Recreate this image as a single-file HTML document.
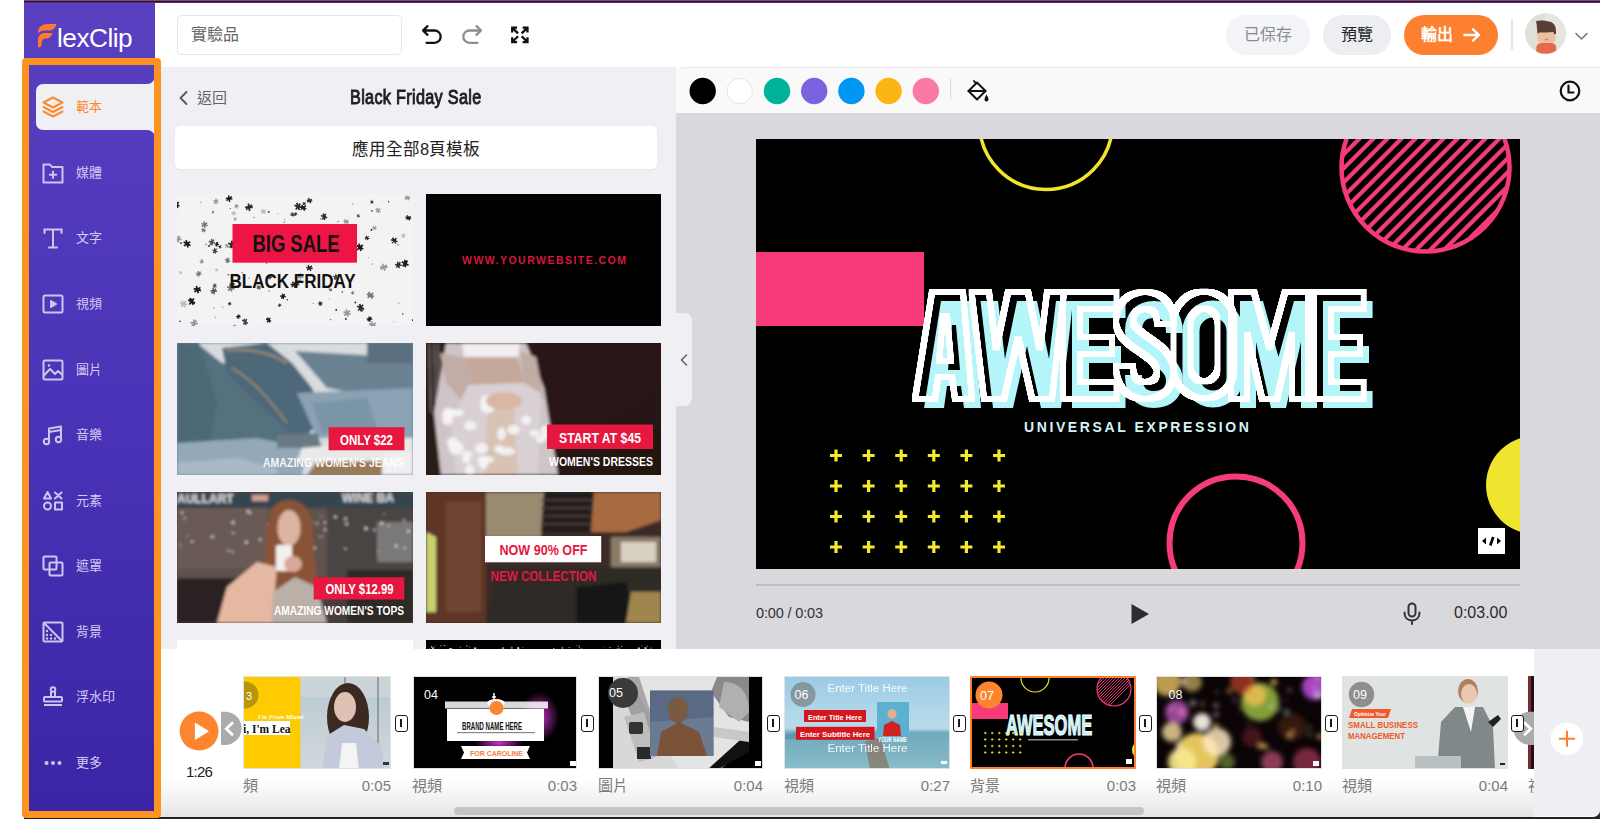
<!DOCTYPE html>
<html lang="zh-TW">
<head>
<meta charset="utf-8">
<style>
*{margin:0;padding:0;box-sizing:border-box}
html,body{width:1600px;height:819px;overflow:hidden;background:#fff;font-family:"Liberation Sans",sans-serif}
.a{position:absolute}
#topline{left:24px;top:0;width:1576px;height:3px;background:linear-gradient(#8d4a66 0,#8d4a66 1px,#2a1020 1px,#2a1020 2px,#4b2f9a 2px)}
#side{left:24px;top:3px;width:131px;height:816px;background:linear-gradient(#5a40c1,#4a33b6 50%,#3b25a6)}
#obox{left:22px;top:58px;width:139px;height:760px;border:7.5px solid #fd9320;border-radius:4px}
#topbar{left:155px;top:3px;width:1445px;height:64px;background:#fff}
#panel{left:155px;top:67px;width:521px;height:582px;background:#f0f0f4}
#tools{left:676px;top:67px;width:924px;height:46px;background:#f9f9fa;border-top-left-radius:8px;border-top:1px solid #e8e8ee}
#canvas{left:676px;top:113px;width:924px;height:536px;background:#d8d8dd}
#timeline{left:155px;top:649px;width:1445px;height:168px;background:linear-gradient(#fff 0,#fff 130px,#ececec 158px,#e4e4e6 168px)}
#botline{left:24px;top:817px;width:1576px;height:2px;background:#222}
.si{left:76px;font-size:13px;line-height:18px;color:#d3cbf2;white-space:nowrap}
.btn{top:15px;height:40px;border-radius:20px;font-size:16px;line-height:40px;text-align:center;white-space:nowrap}
.clip{top:676px;height:93px;overflow:hidden;border:1px solid #e2e2e2;background:#fff}
.clip>svg{display:block}
.dv{top:715px;width:13px;height:17px;border:1.6px solid #1a1a1a;border-radius:3px;background:#fff}
.dv::after{content:"";position:absolute;left:3.9px;top:3px;width:2px;height:8px;background:#1a1a1a}
.lb{top:777px;font-size:15px;line-height:18px;color:#7a7a7a;white-space:nowrap}
.lbr{top:777px;width:100px;text-align:right;font-size:15px;line-height:18px;color:#7a7a7a}
</style>
</head>
<body>
<svg width="0" height="0" style="position:absolute"><defs><filter id="pb" x="-5%" y="-5%" width="110%" height="110%"><feGaussianBlur stdDeviation="1.6"/></filter></defs></svg>
<div id="topline" class="a"></div>
<div id="side" class="a"></div>
<div id="topbar" class="a"></div>
<div id="panel" class="a"></div>
<div id="tools" class="a"></div>
<div id="canvas" class="a"></div>

<div class="a" style="left:177px;top:194px;width:236px;height:132px;overflow:hidden">
<svg width="236" height="132" viewBox="0 0 236 132"><rect width="236" height="132" fill="#f3f3f3"/><path d="M35.5 90.9L39.7 92.7M37.5 89.5L37.7 94.1M39.2 90.1L36.0 93.5" stroke="#555" stroke-width="1.03"/><circle cx="37.6" cy="91.8" r="1.03" fill="#555"/><path d="M227.4 23.0L231.0 23.0M228.6 21.3L229.8 24.7M230.5 21.7L227.9 24.2" stroke="#bbb" stroke-width="0.81"/><circle cx="229.2" cy="23.0" r="0.81" fill="#bbb"/><path d="M12.9 105.3L16.3 106.6M14.1 104.2L15.2 107.7M16.2 105.0L13.1 106.9" stroke="#2a2a2a" stroke-width="0.81"/><circle cx="14.6" cy="106.0" r="0.81" fill="#2a2a2a"/><path d="M179.6 51.6L186.3 55.1M182.0 49.6L183.9 57.0M185.9 50.9L180.1 55.8" stroke="#1a1a1a" stroke-width="1.71"/><circle cx="183.0" cy="53.3" r="1.71" fill="#1a1a1a"/><circle cx="153.7" cy="125.6" r="0.56" fill="#2a2a2a"/><circle cx="175.8" cy="10.0" r="0.56" fill="#555"/><path d="M33.4 96.8L40.0 97.3M36.0 93.8L37.3 100.3M38.9 94.7L34.4 99.5" stroke="#555" stroke-width="1.48"/><circle cx="36.7" cy="97.1" r="1.48" fill="#555"/><path d="M193.1 7.6L196.5 8.7M194.6 6.4L195.1 9.9M196.2 7.0L193.5 9.3" stroke="#2a2a2a" stroke-width="0.81"/><circle cx="194.8" cy="8.1" r="0.81" fill="#2a2a2a"/><circle cx="225.8" cy="120.0" r="0.70" fill="#1a1a1a"/><path d="M129.2 73.5L135.7 74.6M131.0 71.0L133.9 77.0M134.8 71.7L130.1 76.3" stroke="#2a2a2a" stroke-width="1.48"/><circle cx="132.4" cy="74.0" r="1.48" fill="#2a2a2a"/><path d="M65.2 126.2L71.0 129.4M67.0 124.7L69.1 130.9M69.8 125.0L66.4 130.6" stroke="#444" stroke-width="1.48"/><circle cx="68.1" cy="127.8" r="1.48" fill="#444"/><path d="M16.7 94.7L24.1 96.6M19.4 92.0L21.3 99.3M23.4 93.3L17.4 98.0" stroke="#1a1a1a" stroke-width="1.71"/><circle cx="20.4" cy="95.7" r="1.71" fill="#1a1a1a"/><circle cx="51.3" cy="80.8" r="0.70" fill="#2a2a2a"/><path d="M156.1 82.2L161.3 84.2M158.6 80.4L158.9 86.0M160.4 81.0L157.0 85.4" stroke="#444" stroke-width="1.26"/><circle cx="158.7" cy="83.2" r="1.26" fill="#444"/><circle cx="38.5" cy="123.5" r="0.91" fill="#bbb"/><circle cx="100.9" cy="19.7" r="0.56" fill="#999"/><path d="M121.1 86.7L124.3 88.3M121.9 85.9L123.5 89.1M124.1 86.4L121.3 88.6" stroke="#555" stroke-width="0.81"/><circle cx="122.7" cy="87.5" r="0.81" fill="#555"/><path d="M-1.9 44.7L4.7 45.5M1.1 41.9L1.7 48.4M3.3 42.4L-0.5 47.9" stroke="#999" stroke-width="1.48"/><circle cx="1.4" cy="45.1" r="1.48" fill="#999"/><path d="M11.2 106.0L18.1 109.1M12.8 104.2L16.5 110.9M16.9 104.5L12.3 110.5" stroke="#1a1a1a" stroke-width="1.71"/><circle cx="14.6" cy="107.5" r="1.71" fill="#1a1a1a"/><path d="M36.4 6.2L41.5 8.7M38.9 4.6L39.0 10.2M41.1 5.7L36.8 9.2" stroke="#999" stroke-width="1.26"/><circle cx="39.0" cy="7.4" r="1.26" fill="#999"/><path d="M224.8 67.7L231.5 71.2M227.9 65.7L228.4 73.3M230.6 66.6L225.7 72.4" stroke="#1a1a1a" stroke-width="1.71"/><circle cx="228.1" cy="69.5" r="1.71" fill="#1a1a1a"/><path d="M31.8 47.2L38.1 49.1M34.6 44.9L35.2 51.4M37.0 45.6L32.9 50.7" stroke="#555" stroke-width="1.48"/><circle cx="34.9" cy="48.2" r="1.48" fill="#555"/><circle cx="182.4" cy="-0.6" r="0.91" fill="#999"/><path d="M2.0 77.9L5.2 79.6M3.1 77.0L4.2 80.5M5.0 77.6L2.3 79.9" stroke="#bbb" stroke-width="0.81"/><circle cx="3.6" cy="78.7" r="0.81" fill="#bbb"/><circle cx="178.4" cy="108.5" r="0.91" fill="#2a2a2a"/><circle cx="32.1" cy="52.0" r="0.91" fill="#1a1a1a"/><circle cx="152.0" cy="104.9" r="0.70" fill="#bbb"/><path d="M24.5 35.2L28.6 37.3M25.8 34.1L27.3 38.4M28.5 35.0L24.7 37.6" stroke="#777" stroke-width="1.03"/><circle cx="26.6" cy="36.3" r="1.03" fill="#777"/><path d="M144.0 21.5L150.2 23.8M146.3 19.5L147.9 25.9M148.8 19.9L145.4 25.5" stroke="#2a2a2a" stroke-width="1.48"/><circle cx="147.1" cy="22.7" r="1.48" fill="#2a2a2a"/><circle cx="168.6" cy="116.8" r="0.56" fill="#bbb"/><circle cx="221.0" cy="50.7" r="0.70" fill="#555"/><path d="M179.7 21.0L182.9 22.7M180.9 20.1L181.7 23.6M182.7 20.7L179.9 23.0" stroke="#444" stroke-width="0.81"/><circle cx="181.3" cy="21.8" r="0.81" fill="#444"/><path d="M54.5 18.7L59.0 19.8M56.2 17.0L57.3 21.5M58.7 18.0L54.8 20.5" stroke="#bbb" stroke-width="1.03"/><circle cx="56.7" cy="19.2" r="1.03" fill="#bbb"/><path d="M18.9 79.3L24.4 80.2M21.2 77.0L22.1 82.5M23.6 77.8L19.7 81.7" stroke="#777" stroke-width="1.26"/><circle cx="21.7" cy="79.8" r="1.26" fill="#777"/><path d="M129.8 6.2L135.3 7.2M131.6 4.1L133.6 9.3M134.9 5.2L130.2 8.1" stroke="#2a2a2a" stroke-width="1.26"/><circle cx="132.6" cy="6.7" r="1.26" fill="#2a2a2a"/><circle cx="23.8" cy="8.4" r="0.70" fill="#999"/><path d="M189.8 100.2L197.1 102.5M191.6 98.0L195.3 104.7M196.3 98.8L190.6 103.9" stroke="#777" stroke-width="1.71"/><circle cx="193.4" cy="101.3" r="1.71" fill="#777"/><path d="M48.8 4.2L55.4 5.0M51.6 1.4L52.7 7.9M54.8 2.7L49.5 6.6" stroke="#1a1a1a" stroke-width="1.48"/><circle cx="52.1" cy="4.6" r="1.48" fill="#1a1a1a"/><path d="M51.1 49.2L58.4 51.6M54.6 46.6L54.9 54.2M56.8 47.2L52.7 53.6" stroke="#2a2a2a" stroke-width="1.71"/><circle cx="54.7" cy="50.4" r="1.71" fill="#2a2a2a"/><path d="M166.5 117.9L173.7 120.3M169.3 115.4L170.9 122.8M173.1 116.7L167.2 121.5" stroke="#999" stroke-width="1.71"/><circle cx="170.1" cy="119.1" r="1.71" fill="#999"/><path d="M141.1 109.0L145.6 110.1M142.7 107.3L144.0 111.8M144.8 107.8L141.9 111.3" stroke="#2a2a2a" stroke-width="1.03"/><circle cx="143.3" cy="109.6" r="1.03" fill="#2a2a2a"/><circle cx="89.6" cy="69.3" r="0.56" fill="#2a2a2a"/><circle cx="91.9" cy="17.8" r="0.91" fill="#1a1a1a"/><path d="M120.3 81.1L126.4 83.5M123.3 79.0L123.5 85.6M126.2 80.6L120.6 84.0" stroke="#999" stroke-width="1.48"/><circle cx="123.4" cy="82.3" r="1.48" fill="#999"/><path d="M35.3 56.0L40.6 57.8M37.4 54.2L38.5 59.7M39.6 54.7L36.2 59.1" stroke="#444" stroke-width="1.26"/><circle cx="37.9" cy="56.9" r="1.26" fill="#444"/><path d="M224.3 40.7L228.3 42.9M226.1 39.5L226.5 44.1M227.9 40.2L224.7 43.4" stroke="#bbb" stroke-width="1.03"/><circle cx="226.3" cy="41.8" r="1.03" fill="#bbb"/><path d="M52.3 90.1L58.2 93.1M54.3 88.4L56.2 94.8M57.4 89.2L53.0 94.0" stroke="#2a2a2a" stroke-width="1.48"/><circle cx="55.2" cy="91.6" r="1.48" fill="#2a2a2a"/><path d="M37.6 50.1L42.1 50.5M39.7 48.0L39.9 52.6M41.0 48.3L38.7 52.3" stroke="#1a1a1a" stroke-width="1.03"/><circle cx="39.8" cy="50.3" r="1.03" fill="#1a1a1a"/><path d="M189.7 125.0L195.3 125.2M191.9 122.4L193.2 127.8M194.4 123.0L190.7 127.2" stroke="#1a1a1a" stroke-width="1.26"/><circle cx="192.5" cy="125.1" r="1.26" fill="#1a1a1a"/><circle cx="235.8" cy="126.1" r="0.91" fill="#1a1a1a"/><path d="M228.7 23.4L234.2 24.4M230.2 21.4L232.7 26.4M233.7 22.2L229.3 25.6" stroke="#1a1a1a" stroke-width="1.26"/><circle cx="231.5" cy="23.9" r="1.26" fill="#1a1a1a"/><circle cx="195.4" cy="70.0" r="0.56" fill="#444"/><path d="M41.3 52.3L44.7 53.3M42.8 51.0L43.2 54.6M44.3 51.6L41.7 54.0" stroke="#2a2a2a" stroke-width="0.81"/><circle cx="43.0" cy="52.8" r="0.81" fill="#2a2a2a"/><circle cx="110.3" cy="105.7" r="0.70" fill="#1a1a1a"/><path d="M100.8 111.2L104.4 111.3M102.4 109.5L102.8 113.0M103.9 110.0L101.3 112.5" stroke="#2a2a2a" stroke-width="0.81"/><circle cx="102.6" cy="111.2" r="0.81" fill="#2a2a2a"/><path d="M187.8 43.6L192.3 44.4M189.2 41.8L190.9 46.1M191.7 42.4L188.3 45.5" stroke="#2a2a2a" stroke-width="1.03"/><circle cx="190.0" cy="44.0" r="1.03" fill="#2a2a2a"/><circle cx="211.6" cy="7.7" r="0.70" fill="#2a2a2a"/><path d="M119.0 90.0L122.6 90.5M120.0 88.6L121.7 91.8M121.8 88.7L119.9 91.8" stroke="#444" stroke-width="0.81"/><circle cx="120.8" cy="90.2" r="0.81" fill="#444"/><path d="M113.5 90.5L120.1 90.6M115.5 87.6L118.1 93.6M118.9 88.1L114.7 93.1" stroke="#2a2a2a" stroke-width="1.48"/><circle cx="116.8" cy="90.6" r="1.48" fill="#2a2a2a"/><path d="M56.5 24.2L59.7 25.9M57.6 23.3L58.7 26.8M59.2 23.7L57.0 26.5" stroke="#999" stroke-width="0.81"/><circle cx="58.1" cy="25.1" r="0.81" fill="#999"/><path d="M47.9 65.6L53.3 67.1M50.0 63.6L51.2 69.1M52.2 64.1L49.0 68.7" stroke="#777" stroke-width="1.26"/><circle cx="50.6" cy="66.4" r="1.26" fill="#777"/><circle cx="36.9" cy="113.7" r="0.56" fill="#444"/><circle cx="161.1" cy="27.6" r="0.70" fill="#444"/><path d="M89.1 124.9L94.1 127.3M90.5 123.6L92.8 128.6M93.3 123.9L89.9 128.3" stroke="#1a1a1a" stroke-width="1.26"/><circle cx="91.6" cy="126.1" r="1.26" fill="#1a1a1a"/><circle cx="4.0" cy="49.2" r="0.91" fill="#2a2a2a"/><path d="M218.1 70.6L224.7 71.3M220.5 67.7L222.3 74.1M223.4 68.3L219.4 73.5" stroke="#2a2a2a" stroke-width="1.48"/><circle cx="221.4" cy="70.9" r="1.48" fill="#2a2a2a"/><path d="M103.2 102.0L108.8 102.7M105.4 99.6L106.6 105.1M107.8 100.2L104.2 104.5" stroke="#1a1a1a" stroke-width="1.26"/><circle cx="106.0" cy="102.3" r="1.26" fill="#1a1a1a"/><circle cx="159.2" cy="115.9" r="0.91" fill="#1a1a1a"/><circle cx="216.8" cy="127.8" r="0.56" fill="#999"/><path d="M173.9 98.4L177.4 99.3M175.5 97.1L175.8 100.7M176.9 97.6L174.3 100.2" stroke="#777" stroke-width="0.81"/><circle cx="175.6" cy="98.9" r="0.81" fill="#777"/><path d="M24.4 29.6L30.6 31.7M27.0 27.4L27.9 33.9M30.1 28.6L24.9 32.7" stroke="#777" stroke-width="1.48"/><circle cx="27.5" cy="30.6" r="1.48" fill="#777"/><path d="M2.8 109.3L10.3 110.5M4.9 106.5L8.2 113.3M8.8 106.9L4.3 113.0" stroke="#bbb" stroke-width="1.71"/><circle cx="6.5" cy="109.9" r="1.71" fill="#bbb"/><circle cx="36.0" cy="17.4" r="0.56" fill="#1a1a1a"/><path d="M182.5 114.9L186.7 116.8M183.9 113.7L185.3 118.1M186.2 114.2L183.0 117.5" stroke="#777" stroke-width="1.03"/><circle cx="184.6" cy="115.9" r="1.03" fill="#777"/><path d="M203.0 73.1L210.6 73.4M205.5 69.7L208.0 76.8M209.8 71.0L203.7 75.5" stroke="#999" stroke-width="1.71"/><circle cx="206.8" cy="73.3" r="1.71" fill="#999"/><circle cx="91.5" cy="83.5" r="0.70" fill="#bbb"/><path d="M57.4 11.3L61.7 13.1M59.3 9.9L59.8 14.5M61.5 11.0L57.6 13.5" stroke="#999" stroke-width="1.03"/><circle cx="59.6" cy="12.2" r="1.03" fill="#999"/><circle cx="45.7" cy="113.3" r="0.70" fill="#999"/><circle cx="71.9" cy="84.2" r="0.91" fill="#bbb"/><path d="M195.2 33.8L199.8 34.3M196.5 31.9L198.4 36.1M199.1 32.4L195.9 35.7" stroke="#999" stroke-width="1.03"/><circle cx="197.5" cy="34.0" r="1.03" fill="#999"/><path d="M166.4 26.9L171.8 28.4M167.7 25.2L170.5 30.1M171.4 26.0L166.9 29.3" stroke="#999" stroke-width="1.26"/><circle cx="169.1" cy="27.6" r="1.26" fill="#999"/><circle cx="196.0" cy="6.2" r="0.56" fill="#999"/><path d="M50.1 92.8L57.5 94.8M52.9 90.1L54.7 97.5M56.4 91.0L51.2 96.6" stroke="#777" stroke-width="1.71"/><circle cx="53.8" cy="93.8" r="1.71" fill="#777"/><circle cx="3.1" cy="127.3" r="0.91" fill="#444"/><path d="M151.8 95.1L155.2 96.5M152.6 94.2L154.4 97.3M154.8 94.6L152.2 97.0" stroke="#555" stroke-width="0.81"/><circle cx="153.5" cy="95.8" r="0.81" fill="#555"/><circle cx="107.2" cy="28.1" r="0.70" fill="#444"/><path d="M113.5 19.7L117.8 21.2M114.8 18.3L116.5 22.6M117.6 19.2L113.7 21.7" stroke="#444" stroke-width="1.03"/><circle cx="115.6" cy="20.4" r="1.03" fill="#444"/><circle cx="107.6" cy="25.5" r="0.56" fill="#777"/><circle cx="35.9" cy="18.8" r="0.70" fill="#2a2a2a"/><path d="M123.2 12.5L129.3 14.9M124.9 10.7L127.6 16.7M128.8 11.6L123.7 15.8" stroke="#1a1a1a" stroke-width="1.48"/><circle cx="126.3" cy="13.7" r="1.48" fill="#1a1a1a"/><path d="M125.6 9.0L129.0 10.1M126.5 8.0L128.1 11.2M128.3 8.1L126.2 11.0" stroke="#2a2a2a" stroke-width="0.81"/><circle cx="127.3" cy="9.6" r="0.81" fill="#2a2a2a"/><circle cx="136.4" cy="109.3" r="0.56" fill="#555"/><path d="M214.1 45.7L220.4 47.6M215.6 43.7L218.8 49.5M219.4 44.2L215.0 49.1" stroke="#1a1a1a" stroke-width="1.48"/><circle cx="217.2" cy="46.6" r="1.48" fill="#1a1a1a"/><circle cx="191.6" cy="63.6" r="0.56" fill="#999"/><path d="M13.4 128.7L20.9 129.7M16.7 125.4L17.6 133.0M19.5 126.2L14.8 132.2" stroke="#999" stroke-width="1.71"/><circle cx="17.1" cy="129.2" r="1.71" fill="#999"/><path d="M59.1 122.5L63.7 122.8M60.9 120.4L61.9 124.9M63.0 121.0L59.8 124.3" stroke="#1a1a1a" stroke-width="1.03"/><circle cx="61.4" cy="122.6" r="1.03" fill="#1a1a1a"/><circle cx="194.9" cy="16.8" r="0.91" fill="#444"/><path d="M68.2 13.2L75.8 13.3M71.4 9.5L72.6 17.0M75.1 11.0L69.0 15.5" stroke="#2a2a2a" stroke-width="1.71"/><circle cx="72.0" cy="13.2" r="1.71" fill="#2a2a2a"/><path d="M117.4 11.4L124.7 13.5M119.8 8.9L122.3 16.0M123.3 9.4L118.8 15.5" stroke="#2a2a2a" stroke-width="1.71"/><circle cx="121.0" cy="12.5" r="1.71" fill="#2a2a2a"/><circle cx="77.2" cy="23.4" r="0.56" fill="#555"/><path d="M116.9 20.0L120.5 20.3M118.6 18.3L118.7 21.9M119.6 18.6L117.8 21.7" stroke="#2a2a2a" stroke-width="0.81"/><circle cx="118.7" cy="20.1" r="0.81" fill="#2a2a2a"/><path d="M180.1 112.3L187.2 115.0M182.7 110.0L184.6 117.3M186.1 110.8L181.2 116.5" stroke="#2a2a2a" stroke-width="1.71"/><circle cx="183.6" cy="113.6" r="1.71" fill="#2a2a2a"/><circle cx="65.2" cy="78.8" r="0.91" fill="#999"/><path d="M83.8 16.6L89.1 18.4M85.4 14.9L87.5 20.1M88.7 15.7L84.3 19.2" stroke="#bbb" stroke-width="1.26"/><circle cx="86.5" cy="17.5" r="1.26" fill="#bbb"/><circle cx="165.2" cy="98.0" r="0.70" fill="#1a1a1a"/><path d="M54.3 133.0L59.8 134.1M57.0 130.8L57.2 136.4M58.7 131.3L55.5 135.9" stroke="#777" stroke-width="1.26"/><circle cx="57.1" cy="133.6" r="1.26" fill="#777"/><path d="M90.6 82.9L95.2 83.4M92.8 80.8L93.0 85.4M94.7 81.7L91.1 84.5" stroke="#444" stroke-width="1.03"/><circle cx="92.9" cy="83.1" r="1.03" fill="#444"/><circle cx="53.3" cy="14.5" r="0.56" fill="#2a2a2a"/><path d="M192.0 129.8L199.2 132.4M194.6 127.4L196.6 134.7M198.8 129.0L192.4 133.1" stroke="#999" stroke-width="1.71"/><circle cx="195.6" cy="131.1" r="1.71" fill="#999"/><circle cx="29.1" cy="50.5" r="0.91" fill="#999"/><path d="M-4.6 9.2L2.5 12.0M-2.9 7.2L0.8 13.9M1.8 8.1L-3.9 13.1" stroke="#1a1a1a" stroke-width="1.71"/><circle cx="-1.0" cy="10.6" r="1.71" fill="#1a1a1a"/><path d="M22.5 66.9L27.0 67.9M24.3 65.1L25.1 69.7M26.3 65.7L23.2 69.1" stroke="#999" stroke-width="1.03"/><circle cx="24.7" cy="67.4" r="1.03" fill="#999"/><circle cx="92.0" cy="97.1" r="0.70" fill="#444"/><path d="M79.6 92.7L83.9 94.2M80.9 91.3L82.6 95.6M83.5 92.0L80.0 94.9" stroke="#555" stroke-width="1.03"/><circle cx="81.7" cy="93.4" r="1.03" fill="#555"/><path d="M198.6 15.1L203.6 17.6M200.1 13.7L202.0 19.0M203.2 14.5L199.0 18.2" stroke="#999" stroke-width="1.26"/><circle cx="201.1" cy="16.4" r="1.26" fill="#999"/><circle cx="194.4" cy="35.9" r="0.91" fill="#1a1a1a"/><path d="M227.6 3.6L233.2 4.2M229.0 1.4L231.8 6.3M232.6 2.2L228.2 5.6" stroke="#999" stroke-width="1.26"/><circle cx="230.4" cy="3.9" r="1.26" fill="#999"/><path d="M37.8 75.8L41.4 76.1M39.0 74.3L40.3 77.6M41.0 74.8L38.2 77.1" stroke="#bbb" stroke-width="0.81"/><circle cx="39.6" cy="76.0" r="0.81" fill="#bbb"/><circle cx="143.8" cy="25.0" r="0.91" fill="#999"/><path d="M47.9 50.8L52.0 52.9M48.9 49.9L51.1 53.9M51.4 50.1L48.6 53.7" stroke="#999" stroke-width="1.03"/><circle cx="50.0" cy="51.9" r="1.03" fill="#999"/><path d="M50.9 109.2L54.4 110.2M52.5 107.9L52.8 111.5M53.9 108.4L51.4 111.0" stroke="#1a1a1a" stroke-width="0.81"/><circle cx="52.6" cy="109.7" r="0.81" fill="#1a1a1a"/><circle cx="168.8" cy="125.0" r="0.91" fill="#2a2a2a"/><path d="M6.6 48.1L13.5 51.4M9.1 46.1L11.0 53.5M13.2 47.7L6.9 51.9" stroke="#1a1a1a" stroke-width="1.71"/><circle cx="10.0" cy="49.8" r="1.71" fill="#1a1a1a"/><circle cx="221.9" cy="109.1" r="0.70" fill="#777"/><rect x="55.5" y="30" width="124.5" height="38.7" fill="#ee1545"/>
<text x="75.5" y="58" font-family="Liberation Sans" font-weight="bold" font-size="24" textLength="87" lengthAdjust="spacingAndGlyphs" fill="#111">BIG SALE</text>
<text x="52.5" y="94" font-family="Liberation Sans" font-weight="bold" font-size="21" textLength="126" lengthAdjust="spacingAndGlyphs" fill="#111">BLACK FRIDAY</text>
</svg></div>
<div class="a" style="left:426px;top:194px;width:235px;height:132px;background:#000">
<svg width="235" height="132" viewBox="0 0 235 132"><text x="36" y="70" font-family="Liberation Sans" font-weight="bold" font-size="10.5" textLength="164" lengthAdjust="spacing" fill="#d8173e">WWW.YOURWEBSITE.COM</text></svg></div>

<div class="a" style="left:177px;top:343px;width:236px;height:132px;overflow:hidden;background:#6d8596">
<svg width="236" height="132" viewBox="0 0 236 132">
<defs><linearGradient id="jg1" x1="0" y1="0" x2="1" y2="1"><stop offset="0" stop-color="#5e7788"/><stop offset="0.6" stop-color="#7089a0"/><stop offset="1" stop-color="#a8b8c4"/></linearGradient></defs>
<g filter="url(#pb)"><rect width="236" height="132" fill="#d9dcdf"/>
<path d="M0 0H20L45 20L90 30L130 75L135 100L95 112L0 115Z" fill="#55707f"/>
<path d="M0 0H22L40 60L30 115H0Z" fill="#4d6777"/>
<path d="M45 5L90 0L115 20L135 45L150 80L120 95L80 60L50 30Z" fill="#4e6879"/>
<path d="M50 8C70 5 90 8 110 20" stroke="#b89a6a" stroke-width="1.5" fill="none"/>
<path d="M55 25C80 40 95 60 110 80" stroke="#b89a6a" stroke-width="1.2" fill="none"/>
<path d="M118 8L236 15V60L150 45Z" fill="#6b8192"/>
<path d="M190 0H236V20H190Z" fill="#5a7080"/>
<path d="M120 50L236 45V95L140 95Z" fill="#8aa2b4"/>
<path d="M135 60L190 55L200 85L145 90Z" fill="#7a94a8"/>
<path d="M0 100L80 95L130 105L125 132H0Z" fill="#93a9b8"/>
<path d="M0 120L60 115L100 125L100 132H0Z" fill="#a9bac6"/>
<path d="M100 92L140 90L145 105L100 105Z" fill="#6a7a84"/>
<path d="M125 105L236 95V118H120Z" fill="#e9e9e8"/>
<path d="M140 118H210V132H130Z" fill="#9a7a55"/>
<path d="M205 112L236 110V132H205Z" fill="#f0f0f0"/>
</g><rect x="151.6" y="84.2" width="75.8" height="23.1" fill="#e8173f"/>
<text x="163" y="101.5" font-family="Liberation Sans" font-weight="bold" font-size="14" textLength="53" lengthAdjust="spacingAndGlyphs" fill="#fff">ONLY $22</text>
<text x="86" y="123.5" font-family="Liberation Sans" font-weight="bold" font-size="12.5" textLength="141" lengthAdjust="spacingAndGlyphs" fill="#fff" fill-opacity="0.92">AMAZING WOMEN'S JEANS</text>
</svg></div>

<div class="a" style="left:426px;top:343px;width:235px;height:132px;overflow:hidden;background:#1f1512">
<svg width="235" height="132" viewBox="0 0 235 132">
<defs><linearGradient id="dg1" x1="0" y1="0" x2="1" y2="1"><stop offset="0" stop-color="#2a1a15"/><stop offset="0.6" stop-color="#2a1813"/><stop offset="1" stop-color="#1a0e0c"/></linearGradient></defs>
<g filter="url(#pb)"><rect width="235" height="132" fill="url(#dg1)"/>
<rect x="0" y="0" width="14" height="132" fill="#2a1c18"/>
<path d="M3 0L5 70M8 0L10 60M12 0L13 50" stroke="#8a8080" stroke-width="1.2"/>
<path d="M20 0H100L118 45L132 132H15L8 70L14 35Z" fill="#cfc5c8"/>
<path d="M36 0H94L92 14L38 14Z" fill="#f2eef0"/>
<path d="M38 14H92L98 40L42 42Z" fill="#c4a89c"/>
<path d="M14 10L36 14L60 55L45 68L20 40Z" fill="#c2aca6"/>
<path d="M94 8L110 14L118 55L100 62Z" fill="#c2aca6"/>
<path d="M42 42L98 40L115 50L112 132H30L25 80Z" fill="#d8d0d4"/>
<path d="M62 65L88 65L92 132H58Z" fill="#d8c2b4"/>
<ellipse cx="43.8" cy="127.0" rx="4.6" ry="5.8" fill="#f6f4f6" opacity="0.9"/><ellipse cx="28.9" cy="69.8" rx="9.0" ry="3.8" fill="#f6f4f6" opacity="0.9"/><ellipse cx="87.4" cy="86.7" rx="6.3" ry="5.0" fill="#f6f4f6" opacity="0.9"/><ellipse cx="40.2" cy="116.4" rx="4.4" ry="3.9" fill="#f6f4f6" opacity="0.9"/><ellipse cx="22.1" cy="71.3" rx="6.0" ry="6.6" fill="#f6f4f6" opacity="0.9"/><ellipse cx="59.8" cy="59.1" rx="5.3" ry="7.0" fill="#f6f4f6" opacity="0.9"/><ellipse cx="26.6" cy="99.6" rx="5.9" ry="5.6" fill="#f6f4f6" opacity="0.9"/><ellipse cx="55.5" cy="105.3" rx="6.5" ry="5.6" fill="#f6f4f6" opacity="0.9"/><ellipse cx="114.6" cy="96.5" rx="4.7" ry="3.3" fill="#f6f4f6" opacity="0.9"/><ellipse cx="119.3" cy="89.1" rx="5.0" ry="6.8" fill="#f6f4f6" opacity="0.9"/><ellipse cx="80.8" cy="108.3" rx="8.4" ry="4.1" fill="#f6f4f6" opacity="0.9"/><ellipse cx="57.5" cy="120.2" rx="4.7" ry="6.1" fill="#f6f4f6" opacity="0.9"/><ellipse cx="30.2" cy="105.2" rx="7.5" ry="6.8" fill="#f6f4f6" opacity="0.9"/><ellipse cx="108.6" cy="90.3" rx="5.0" ry="3.6" fill="#f6f4f6" opacity="0.9"/><ellipse cx="75.5" cy="90.8" rx="4.4" ry="6.6" fill="#f6f4f6" opacity="0.9"/><ellipse cx="73.3" cy="106.1" rx="5.1" ry="4.0" fill="#f6f4f6" opacity="0.9"/><ellipse cx="21.3" cy="77.5" rx="5.3" ry="4.7" fill="#f6f4f6" opacity="0.9"/><ellipse cx="59.6" cy="116.7" rx="8.5" ry="3.7" fill="#f6f4f6" opacity="0.9"/><ellipse cx="61.6" cy="63.3" rx="7.3" ry="6.9" fill="#f6f4f6" opacity="0.9"/><ellipse cx="41.2" cy="111.3" rx="5.5" ry="3.1" fill="#f6f4f6" opacity="0.9"/><ellipse cx="100.3" cy="77.3" rx="4.9" ry="4.7" fill="#f6f4f6" opacity="0.9"/><ellipse cx="44.3" cy="82.8" rx="6.2" ry="4.7" fill="#f6f4f6" opacity="0.9"/>
<ellipse cx="78" cy="58" rx="18" ry="9" fill="#d9b6a6"/>
<path d="M130 0H235V132H135Z" fill="#2a1a16" opacity="0.35"/>
</g><rect x="121" y="81.5" width="106" height="24.5" fill="#e8173f"/>
<text x="133" y="100" font-family="Liberation Sans" font-weight="bold" font-size="14" textLength="82" lengthAdjust="spacingAndGlyphs" fill="#fff">START AT $45</text>
<text x="123" y="122.5" font-family="Liberation Sans" font-weight="bold" font-size="12.5" textLength="104" lengthAdjust="spacingAndGlyphs" fill="#fff">WOMEN'S DRESSES</text>
</svg></div>

<div class="a" style="left:177px;top:492px;width:236px;height:131px;overflow:hidden;background:#4c403c">
<svg width="236" height="131" viewBox="0 0 236 131">
<defs><linearGradient id="cg1" x1="0" y1="0" x2="1" y2="0"><stop offset="0" stop-color="#5a4c48"/><stop offset="0.5" stop-color="#4c403c"/><stop offset="1" stop-color="#3e3a3a"/></linearGradient></defs>
<g filter="url(#pb)"><rect width="236" height="131" fill="url(#cg1)"/>
<rect x="0" y="16" width="236" height="70" fill="#5e524e"/>
<rect x="0" y="16" width="90" height="60" fill="#6a5a55"/>
<rect x="150" y="16" width="86" height="70" fill="#4a4442"/>
<rect x="200" y="30" width="36" height="40" fill="#7a7878"/>
<rect width="236" height="16" fill="#34444f"/>
<text x="0" y="11" font-family="Liberation Sans" font-weight="bold" font-size="12" fill="#e8e8e8">AULLART</text><rect x="75" y="3" width="16" height="6" fill="#d0a090"/><text x="165" y="10" font-family="Liberation Sans" font-weight="bold" font-size="12" fill="#e8e8e8">WINE BA</text>
<circle cx="56.2" cy="40.9" r="0.9" fill="#e8f0f0"/><circle cx="142.5" cy="44.3" r="0.6" fill="#e8f0f0"/><circle cx="3.1" cy="53.2" r="0.8" fill="#e8f0f0"/><circle cx="55.3" cy="59.8" r="0.9" fill="#e8f0f0"/><circle cx="197.4" cy="38.0" r="1.0" fill="#e8f0f0"/><circle cx="35.5" cy="44.7" r="1.2" fill="#e8f0f0"/><circle cx="123.5" cy="49.1" r="1.1" fill="#e8f0f0"/><circle cx="15.1" cy="49.8" r="1.0" fill="#e8f0f0"/><circle cx="71.1" cy="19.3" r="1.2" fill="#e8f0f0"/><circle cx="111.6" cy="48.2" r="1.2" fill="#e8f0f0"/><circle cx="168.5" cy="56.7" r="0.9" fill="#e8f0f0"/><circle cx="189.0" cy="36.7" r="1.3" fill="#e8f0f0"/><circle cx="207.4" cy="22.1" r="0.7" fill="#e8f0f0"/><circle cx="51.2" cy="58.6" r="0.9" fill="#e8f0f0"/><circle cx="147.9" cy="30.6" r="1.0" fill="#e8f0f0"/><circle cx="91.1" cy="32.7" r="1.0" fill="#e8f0f0"/><circle cx="137.9" cy="56.0" r="1.1" fill="#e8f0f0"/><circle cx="219.2" cy="54.0" r="1.3" fill="#e8f0f0"/><circle cx="158.4" cy="24.9" r="1.2" fill="#e8f0f0"/><circle cx="227.7" cy="56.0" r="1.0" fill="#e8f0f0"/><circle cx="168.5" cy="26.9" r="1.2" fill="#e8f0f0"/><circle cx="135.4" cy="30.0" r="0.6" fill="#e8f0f0"/><circle cx="201.5" cy="59.6" r="0.7" fill="#e8f0f0"/><circle cx="188.9" cy="35.2" r="0.7" fill="#e8f0f0"/><circle cx="69.4" cy="50.3" r="1.2" fill="#e8f0f0"/><circle cx="10.4" cy="43.8" r="0.6" fill="#e8f0f0"/><circle cx="169.6" cy="31.9" r="1.2" fill="#e8f0f0"/><circle cx="231.4" cy="39.2" r="1.3" fill="#e8f0f0"/><circle cx="73.1" cy="21.2" r="1.0" fill="#e8f0f0"/><circle cx="7.4" cy="26.3" r="0.9" fill="#e8f0f0"/><circle cx="144.1" cy="24.6" r="0.6" fill="#e8f0f0"/><circle cx="204.8" cy="31.2" r="1.3" fill="#e8f0f0"/><circle cx="211.6" cy="33.9" r="0.9" fill="#e8f0f0"/><circle cx="122.7" cy="45.0" r="1.0" fill="#e8f0f0"/><circle cx="132.0" cy="44.0" r="1.3" fill="#e8f0f0"/><circle cx="119.7" cy="36.1" r="1.1" fill="#e8f0f0"/><circle cx="56.1" cy="30.6" r="1.3" fill="#e8f0f0"/><circle cx="123.0" cy="41.0" r="0.6" fill="#e8f0f0"/><circle cx="98.0" cy="42.4" r="0.6" fill="#e8f0f0"/><circle cx="145.3" cy="44.6" r="0.6" fill="#e8f0f0"/><circle cx="148.1" cy="37.6" r="1.1" fill="#e8f0f0"/><circle cx="83.2" cy="47.7" r="1.1" fill="#e8f0f0"/><circle cx="5.2" cy="20.5" r="1.1" fill="#e8f0f0"/><circle cx="227.3" cy="28.5" r="0.9" fill="#e8f0f0"/><circle cx="139.9" cy="31.4" r="0.9" fill="#e8f0f0"/>
<rect x="0" y="86" width="60" height="45" fill="#2a2220"/>
<rect x="170" y="78" width="66" height="53" fill="#2e2a28"/>
<path d="M90 45C90 15 100 8 112 8C126 8 136 18 136 45L142 110L84 110Z" fill="#8a5236"/>
<ellipse cx="112" cy="36" rx="11.5" ry="18" fill="#dcb4a4"/>
<path d="M40 131L50 95L80 70L100 75L95 131Z" fill="#e5b8a2"/>
<path d="M95 131L96 100L118 85L140 95L150 131Z" fill="#bab0a8"/>
<rect x="99" y="53" width="16" height="26" rx="2" fill="#f4f0ec"/>
<ellipse cx="116" cy="72" rx="9" ry="8" fill="#d8a898"/>
</g><rect x="136.7" y="85.3" width="90.6" height="22.2" fill="#e8173f"/>
<text x="148.5" y="102" font-family="Liberation Sans" font-weight="bold" font-size="14" textLength="68" lengthAdjust="spacingAndGlyphs" fill="#fff">ONLY $12.99</text>
<text x="97" y="122.5" font-family="Liberation Sans" font-weight="bold" font-size="12.5" textLength="130" lengthAdjust="spacingAndGlyphs" fill="#fff">AMAZING WOMEN'S TOPS</text>
</svg></div>

<div class="a" style="left:426px;top:492px;width:235px;height:131px;overflow:hidden;background:#3a2c25">
<svg width="235" height="131" viewBox="0 0 235 131">
<g filter="url(#pb)"><rect width="235" height="131" fill="#3a2c25"/>
<path d="M0 0H60V131H0Z" fill="#5e3626"/>
<path d="M20 10H55V120H20Z" fill="#6e4430"/>
<path d="M0 40L10 45V120H0Z" fill="#c8d070"/>
<path d="M60 0H120L115 45H60Z" fill="#9a8a70"/>
<path d="M118 0H175L170 40H115Z" fill="#221c1a"/>
<path d="M115 8H170M115 16H170M115 24H170M115 32H170" stroke="#4a3e38" stroke-width="2"/>
<path d="M168 0H235V28L200 40L165 40Z" fill="#a86a40"/>
<path d="M185 45H235V90H185Z" fill="#8a7a68"/><path d="M195 50H230V70H195Z" fill="#d8d2c4"/>
<path d="M70 75H235V131H60Z" fill="#2e2a28"/>
<path d="M150 95L200 90L210 131H150Z" fill="#141212"/>
<path d="M205 100H235V131H200Z" fill="#a0864e"/>
</g><rect x="59" y="44" width="116.2" height="26.3" fill="#fff"/>
<text x="73.5" y="63" font-family="Liberation Sans" font-weight="bold" font-size="15" textLength="88" lengthAdjust="spacingAndGlyphs" fill="#e5173f">NOW 90% OFF</text>
<text x="64.5" y="88.5" font-family="Liberation Sans" font-weight="bold" font-size="14" textLength="106" lengthAdjust="spacingAndGlyphs" fill="#e5173f">NEW COLLECTION</text>
</svg></div>
<div class="a" style="left:177px;top:640px;width:236px;height:9px;background:#fff"></div>
<div class="a" style="left:426px;top:640px;width:235px;height:9px;overflow:hidden;background:#000"><svg width="235" height="9"><circle cx="127.8" cy="3.6" r="0.7" fill="#ccc"/><circle cx="7.1" cy="3.3" r="1.0" fill="#ccc"/><circle cx="9.6" cy="0.3" r="0.5" fill="#666"/><circle cx="60.7" cy="6.0" r="1.1" fill="#aaa"/><circle cx="85.7" cy="2.7" r="1.2" fill="#666"/><circle cx="61.9" cy="5.7" r="0.7" fill="#aaa"/><circle cx="70.2" cy="5.8" r="0.9" fill="#666"/><circle cx="5.7" cy="1.9" r="0.8" fill="#ccc"/><circle cx="225.1" cy="3.1" r="0.6" fill="#ccc"/><circle cx="192.3" cy="1.1" r="0.8" fill="#666"/><circle cx="189.4" cy="5.9" r="1.1" fill="#888"/><circle cx="143.3" cy="2.6" r="0.7" fill="#aaa"/><circle cx="185.0" cy="4.8" r="0.8" fill="#ccc"/><circle cx="177.7" cy="2.0" r="0.5" fill="#666"/><circle cx="113.7" cy="4.4" r="0.5" fill="#ccc"/><circle cx="208.5" cy="7.9" r="0.6" fill="#666"/><circle cx="49.2" cy="3.4" r="1.2" fill="#ccc"/><circle cx="40.9" cy="1.1" r="0.8" fill="#888"/><circle cx="176.5" cy="6.8" r="0.9" fill="#666"/><circle cx="184.0" cy="2.4" r="0.6" fill="#aaa"/><circle cx="88.0" cy="5.9" r="0.6" fill="#888"/><circle cx="43.8" cy="1.9" r="0.6" fill="#888"/><circle cx="77.0" cy="3.2" r="1.2" fill="#888"/><circle cx="153.3" cy="0.8" r="0.8" fill="#666"/><circle cx="24.2" cy="3.8" r="1.1" fill="#ccc"/><circle cx="215.8" cy="0.3" r="0.6" fill="#666"/><circle cx="11.9" cy="4.8" r="1.1" fill="#888"/><circle cx="219.5" cy="3.0" r="1.1" fill="#ccc"/><circle cx="142.3" cy="6.2" r="0.9" fill="#666"/><circle cx="25.0" cy="4.8" r="0.9" fill="#888"/><circle cx="8.8" cy="2.7" r="0.4" fill="#aaa"/><circle cx="9.0" cy="5.9" r="1.1" fill="#666"/><circle cx="193.2" cy="3.3" r="0.7" fill="#aaa"/><circle cx="18.4" cy="0.3" r="0.8" fill="#ccc"/><circle cx="14.9" cy="0.8" r="0.7" fill="#888"/><circle cx="150.8" cy="0.7" r="0.5" fill="#aaa"/><circle cx="96.7" cy="2.3" r="0.6" fill="#666"/><circle cx="73.7" cy="4.5" r="0.7" fill="#ccc"/><circle cx="4.3" cy="6.1" r="1.0" fill="#888"/><circle cx="92.2" cy="3.2" r="1.2" fill="#ccc"/><circle cx="212.8" cy="3.4" r="1.1" fill="#ccc"/><circle cx="136.4" cy="2.9" r="1.0" fill="#888"/><circle cx="3.5" cy="4.4" r="0.9" fill="#ccc"/><circle cx="21.0" cy="5.0" r="0.7" fill="#888"/><circle cx="34.4" cy="2.3" r="0.8" fill="#666"/><circle cx="25.7" cy="3.9" r="1.0" fill="#888"/><circle cx="71.2" cy="6.7" r="0.4" fill="#ccc"/><circle cx="74.2" cy="4.9" r="0.9" fill="#666"/><circle cx="213.4" cy="5.0" r="1.1" fill="#888"/><circle cx="151.1" cy="6.9" r="0.9" fill="#888"/><circle cx="195.7" cy="1.5" r="0.6" fill="#ccc"/><circle cx="221.5" cy="1.3" r="0.7" fill="#888"/><circle cx="58.3" cy="5.8" r="1.1" fill="#666"/><circle cx="208.6" cy="6.7" r="0.9" fill="#aaa"/><circle cx="27.8" cy="4.8" r="0.8" fill="#aaa"/><circle cx="153.2" cy="2.5" r="0.6" fill="#ccc"/><circle cx="155.5" cy="3.6" r="0.8" fill="#666"/><circle cx="0.8" cy="7.9" r="0.8" fill="#ccc"/><circle cx="180.2" cy="6.2" r="0.8" fill="#888"/><circle cx="191.3" cy="3.2" r="0.5" fill="#aaa"/></svg></div>
<div id="timeline" class="a"></div>

<svg class="a" style="left:179px;top:711px" width="65" height="41" viewBox="179 711 65 41">
<path d="M221 711.7H225A16.6 16.6 0 0 1 225 744.9H221Z" fill="#ababab"/>
<path d="M233 722.3L226.3 728.8L233 735.3" stroke="#fff" stroke-width="2.8" fill="none" stroke-linejoin="miter"/>
<circle cx="199.1" cy="731.1" r="19.5" fill="#fd8530"/>
<path d="M195.5 723.5L208 731.2L195.5 739Z" fill="#fff" stroke="#fff" stroke-width="1.2" stroke-linejoin="round"/>
</svg>
<div class="a" style="left:186px;top:763px;font-size:15px;line-height:18px;color:#222;letter-spacing:-0.8px">1:26</div>

<div class="a clip" style="left:243px;width:148px">
<svg width="148" height="93" viewBox="0 0 148 93">
<defs><linearGradient id="wg" x1="0" y1="0" x2="0" y2="1"><stop offset="0" stop-color="#b8c8d0"/><stop offset="1" stop-color="#d0d8dc"/></linearGradient></defs>
<rect width="148" height="93" fill="url(#wg)"/>
<rect x="56" y="0" width="92" height="20" fill="#c9d3d8"/>
<rect x="100" y="0" width="2" height="60" fill="#6a6a6a" opacity="0.5"/><rect x="133" y="0" width="2" height="70" fill="#6a6a6a" opacity="0.5"/>
<ellipse cx="104" cy="40" rx="21" ry="34" fill="#3b2a22"/>
<ellipse cx="101" cy="30" rx="11" ry="15" fill="#e0c2b4"/>
<path d="M78 93L84 58L100 48L120 52L138 70L140 93Z" fill="#c2cadb"/>
<path d="M95 93L98 66L112 66L115 93Z" fill="#f4f4f4"/>
<rect width="56.3" height="93" fill="#fecb00"/>
<circle cx="1" cy="18" r="13.5" fill="#b8940a"/>
<text x="2" y="22.5" font-family="Liberation Sans" font-size="11" fill="#fff">3</text>
<text x="14" y="42" font-family="Liberation Serif" font-style="italic" font-weight="bold" font-size="6.5" fill="#fff">I'm From Miami</text>
<rect x="0" y="44" width="46" height="14" fill="#fff"/>
<text x="-1" y="55.5" font-family="Liberation Serif" font-weight="bold" font-size="11.5" fill="#111">i, I'm Lea</text>
<rect x="139" y="85" width="6" height="3" fill="#333"/>
</svg></div>
<div class="a dv" style="left:395px"></div>
<div class="a clip" style="left:412.5px;width:164.5px">
<svg width="165" height="93" viewBox="0 0 165 93">
<defs><radialGradient id="pg" cx="0.5" cy="0.5" r="0.5"><stop offset="0" stop-color="#ff40ff" stop-opacity="0.8"/><stop offset="1" stop-color="#ff40ff" stop-opacity="0"/></radialGradient></defs>
<rect width="165" height="93" fill="#000"/>
<ellipse cx="125" cy="40" rx="20" ry="25" fill="url(#pg)"/>
<ellipse cx="85" cy="66" rx="25" ry="8" fill="url(#pg)"/>
<text x="10" y="22" font-family="Liberation Sans" font-size="12.5" fill="#fff">04</text>
<rect x="31" y="24.5" width="103" height="7" fill="#fff" opacity="0.85"/>
<rect x="33" y="32" width="97" height="32" fill="#fff"/>
<path d="M80 24L80 16M78 20h4" stroke="#fff" stroke-width="1.5"/>
<ellipse cx="82" cy="26" rx="9" ry="4" fill="#fff"/>
<circle cx="82.5" cy="31" r="7" fill="#fd8530"/>
<text x="48" y="52.5" font-family="Liberation Sans" font-weight="bold" font-size="10" textLength="60" lengthAdjust="spacingAndGlyphs" fill="#111">BRAND NAME HERE</text>
<rect x="43" y="55" width="78" height="1.2" fill="#888"/>
<path d="M47 69H116L113 75.5L116 82H47L50 75.5Z" fill="#fff"/>
<text x="56" y="79" font-family="Liberation Sans" font-weight="bold" font-size="8" textLength="53" lengthAdjust="spacingAndGlyphs" fill="#f08040">FOR CAROLINE</text>
<rect x="156" y="84" width="6" height="5" fill="#fff"/>
</svg></div>
<div class="a dv" style="left:581px"></div>
<div class="a clip" style="left:598.4px;width:164.6px">
<svg width="165" height="93" viewBox="0 0 165 93">
<rect width="165" height="93" fill="#000"/>
<path d="M14 0H118L150 20L150 70L120 93H14Z" fill="#e4e4e4"/>
<path d="M14 0H30L80 93H14Z" fill="#d8d8d8"/>
<path d="M118 0H150V45L130 40L112 15Z" fill="#8a8a8a"/>
<path d="M125 5C140 5 150 15 150 35L140 45L120 30Z" fill="#b0b0b0"/>
<path d="M150 55V75L118 93H108Z" fill="#111"/>
<path d="M20 8L30 0H40L60 60L45 70Z" fill="#3a3a3a" opacity="0.35"/><circle cx="24" cy="16" r="15" fill="#3a3a3a"/>
<path d="M25 40L45 35L58 80L40 85Z" fill="#bdbdbd"/>
<rect x="30" y="45" width="14" height="12" rx="2" fill="#333"/>
<rect x="38" y="70" width="14" height="12" fill="#2a2a2a"/>
<path d="M115 50L150 55V65L115 60Z" fill="#c8c8c8"/>
<rect x="51" y="13.4" width="63.6" height="65.6" fill="#5a6a84"/>
<path d="M51 45L114 40V79H51Z" fill="#6a7a90"/>
<ellipse cx="79" cy="33" rx="10" ry="13" fill="#7a5a42"/>
<path d="M58 79L62 55L80 45L100 55L108 79Z" fill="#7a5238"/>
<text x="10" y="20" font-family="Liberation Sans" font-size="12.5" fill="#fff">05</text>
<rect x="156" y="84" width="6" height="5" fill="#fff"/>
</svg></div>
<div class="a dv" style="left:767px"></div>
<div class="a clip" style="left:784px;width:165.5px">
<svg width="166" height="93" viewBox="0 0 166 93">
<defs><linearGradient id="sg" x1="0" y1="0" x2="0" y2="1"><stop offset="0" stop-color="#9ccbe6"/><stop offset="0.55" stop-color="#b9dcea"/><stop offset="0.6" stop-color="#6fa9bf"/><stop offset="1" stop-color="#8abdc8"/></linearGradient></defs>
<rect width="166" height="93" fill="url(#sg)"/>
<path d="M0 58C20 52 40 50 70 56L70 62H0Z" fill="#5a8a9a" opacity="0.6"/>
<path d="M80 65L95 60L105 93H85Z" fill="#8a7060" opacity="0.7"/>
<circle cx="18" cy="17.5" r="12.5" fill="#7a8585" opacity="0.75"/>
<text x="9.5" y="22" font-family="Liberation Sans" font-size="12.5" fill="#fff">06</text>
<text x="42.5" y="15" font-family="Liberation Sans" font-size="10" textLength="80" lengthAdjust="spacingAndGlyphs" fill="#fff" opacity="0.9">Enter Title Here</text>
<rect x="19" y="33" width="62" height="12" fill="#d4171f"/>
<text x="23" y="42.5" font-family="Liberation Sans" font-weight="bold" font-size="7.5" textLength="54" lengthAdjust="spacingAndGlyphs" fill="#fff">Enter Title Here</text>
<rect x="11" y="49.8" width="78.5" height="13" fill="#d4171f"/>
<text x="15" y="59.5" font-family="Liberation Sans" font-weight="bold" font-size="7.5" textLength="70" lengthAdjust="spacingAndGlyphs" fill="#fff">Enter Subtitle Here</text>
<rect x="92" y="25" width="32" height="34" fill="#5eb0d0"/>
<ellipse cx="107" cy="37" rx="4.5" ry="5" fill="#e0b090"/>
<path d="M98 59L99 48L107 44L115 48L116 59Z" fill="#d02020"/>
<text x="93" y="65" font-family="Liberation Sans" font-weight="bold" font-size="7" textLength="29" lengthAdjust="spacingAndGlyphs" fill="#fff">YOUR NAME</text>
<text x="42.5" y="75" font-family="Liberation Sans" font-size="10" textLength="80" lengthAdjust="spacingAndGlyphs" fill="#fff" opacity="0.9">Enter Title Here</text>
<rect x="156" y="84" width="6" height="3" fill="#fff"/>
</svg></div>
<div class="a dv" style="left:953px"></div>
<div class="a clip" style="left:969.5px;width:166.3px;border:2px solid #fd8030;border-radius:1px">
<svg width="163" height="90" viewBox="0 0 163 90">
<rect width="163" height="90" fill="#000"/>
<circle cx="63" cy="0" r="14" fill="none" stroke="#e8dc2a" stroke-width="1.2"/>
<circle cx="142" cy="11" r="17" fill="none" stroke="#f43a7a" stroke-width="1.2"/>
<defs><clipPath id="mhc"><circle cx="142" cy="11" r="17"/></clipPath></defs><g clip-path="url(#mhc)"><path d="M84.0 30L124.0 -10" stroke="#f43a7a" stroke-width="0.9"/><path d="M87.0 30L127.0 -10" stroke="#f43a7a" stroke-width="0.9"/><path d="M90.0 30L130.0 -10" stroke="#f43a7a" stroke-width="0.9"/><path d="M93.0 30L133.0 -10" stroke="#f43a7a" stroke-width="0.9"/><path d="M96.0 30L136.0 -10" stroke="#f43a7a" stroke-width="0.9"/><path d="M99.0 30L139.0 -10" stroke="#f43a7a" stroke-width="0.9"/><path d="M102.0 30L142.0 -10" stroke="#f43a7a" stroke-width="0.9"/><path d="M105.0 30L145.0 -10" stroke="#f43a7a" stroke-width="0.9"/><path d="M108.0 30L148.0 -10" stroke="#f43a7a" stroke-width="0.9"/><path d="M111.0 30L151.0 -10" stroke="#f43a7a" stroke-width="0.9"/><path d="M114.0 30L154.0 -10" stroke="#f43a7a" stroke-width="0.9"/><path d="M117.0 30L157.0 -10" stroke="#f43a7a" stroke-width="0.9"/><path d="M120.0 30L160.0 -10" stroke="#f43a7a" stroke-width="0.9"/><path d="M123.0 30L163.0 -10" stroke="#f43a7a" stroke-width="0.9"/><path d="M126.0 30L166.0 -10" stroke="#f43a7a" stroke-width="0.9"/><path d="M129.0 30L169.0 -10" stroke="#f43a7a" stroke-width="0.9"/><path d="M132.0 30L172.0 -10" stroke="#f43a7a" stroke-width="0.9"/><path d="M135.0 30L175.0 -10" stroke="#f43a7a" stroke-width="0.9"/></g>
<rect x="0" y="25" width="36" height="16" fill="#f8397a"/>
<circle cx="17" cy="17" r="13.5" fill="#fd8530"/>
<text x="8" y="22" font-family="Liberation Sans" font-size="12.5" fill="#fff">07</text>
<g transform="translate(34,57) scale(0.55,1)"><text x="0" y="0" font-family="Liberation Sans" font-weight="bold" font-size="30" fill="#b3f5f9" stroke="#fff" stroke-width="1.2">AWESOME</text></g>
<rect x="56" y="61" width="50" height="1.5" fill="#cfeff2" opacity="0.6"/>
<path d="M12.0 55.0h2.5M13.2 53.8v2.5" stroke="#f2e42b" stroke-width="0.9"/><path d="M12.0 61.5h2.5M13.2 60.2v2.5" stroke="#f2e42b" stroke-width="0.9"/><path d="M12.0 68.0h2.5M13.2 66.8v2.5" stroke="#f2e42b" stroke-width="0.9"/><path d="M12.0 74.5h2.5M13.2 73.2v2.5" stroke="#f2e42b" stroke-width="0.9"/><path d="M19.0 55.0h2.5M20.2 53.8v2.5" stroke="#f2e42b" stroke-width="0.9"/><path d="M19.0 61.5h2.5M20.2 60.2v2.5" stroke="#f2e42b" stroke-width="0.9"/><path d="M19.0 68.0h2.5M20.2 66.8v2.5" stroke="#f2e42b" stroke-width="0.9"/><path d="M19.0 74.5h2.5M20.2 73.2v2.5" stroke="#f2e42b" stroke-width="0.9"/><path d="M26.0 55.0h2.5M27.2 53.8v2.5" stroke="#f2e42b" stroke-width="0.9"/><path d="M26.0 61.5h2.5M27.2 60.2v2.5" stroke="#f2e42b" stroke-width="0.9"/><path d="M26.0 68.0h2.5M27.2 66.8v2.5" stroke="#f2e42b" stroke-width="0.9"/><path d="M26.0 74.5h2.5M27.2 73.2v2.5" stroke="#f2e42b" stroke-width="0.9"/><path d="M33.0 55.0h2.5M34.2 53.8v2.5" stroke="#f2e42b" stroke-width="0.9"/><path d="M33.0 61.5h2.5M34.2 60.2v2.5" stroke="#f2e42b" stroke-width="0.9"/><path d="M33.0 68.0h2.5M34.2 66.8v2.5" stroke="#f2e42b" stroke-width="0.9"/><path d="M33.0 74.5h2.5M34.2 73.2v2.5" stroke="#f2e42b" stroke-width="0.9"/><path d="M40.0 55.0h2.5M41.2 53.8v2.5" stroke="#f2e42b" stroke-width="0.9"/><path d="M40.0 61.5h2.5M41.2 60.2v2.5" stroke="#f2e42b" stroke-width="0.9"/><path d="M40.0 68.0h2.5M41.2 66.8v2.5" stroke="#f2e42b" stroke-width="0.9"/><path d="M40.0 74.5h2.5M41.2 73.2v2.5" stroke="#f2e42b" stroke-width="0.9"/><path d="M47.0 55.0h2.5M48.2 53.8v2.5" stroke="#f2e42b" stroke-width="0.9"/><path d="M47.0 61.5h2.5M48.2 60.2v2.5" stroke="#f2e42b" stroke-width="0.9"/><path d="M47.0 68.0h2.5M48.2 66.8v2.5" stroke="#f2e42b" stroke-width="0.9"/><path d="M47.0 74.5h2.5M48.2 73.2v2.5" stroke="#f2e42b" stroke-width="0.9"/>
<circle cx="107" cy="90" r="14" fill="none" stroke="#f43a7a" stroke-width="1.5"/>
<circle cx="170" cy="72" r="10" fill="#efe52e"/>
<rect x="154" y="81" width="6" height="5" fill="#fff"/>
</svg></div>
<div class="a dv" style="left:1139px"></div>
<div class="a clip" style="left:1156px;width:165.5px">
<svg width="166" height="93" viewBox="0 0 166 93">
<defs><filter id="bb" x="-20%" y="-20%" width="140%" height="140%"><feGaussianBlur stdDeviation="2.5"/></filter></defs>
<rect width="166" height="93" fill="#0a0406"/>
<g filter="url(#bb)">
<circle cx="40" cy="78" r="22" fill="#f0d060" opacity="0.95"/>
<circle cx="25" cy="85" r="14" fill="#f8e890" opacity="0.9"/>
<circle cx="60" cy="65" r="14" fill="#ffe8c0" opacity="0.85"/>
<circle cx="45" cy="45" r="9" fill="#fff8f0" opacity="0.9"/>
<circle cx="15" cy="55" r="10" fill="#f8e0a0" opacity="0.8"/>
<circle cx="20" cy="35" r="12" fill="#d060d0" opacity="0.7"/>
<circle cx="10" cy="5" r="14" fill="#e8c060" opacity="0.8"/>
<circle cx="35" cy="5" r="10" fill="#f0d070" opacity="0.6"/>
<circle cx="103" cy="25" r="19" fill="#90b040" opacity="0.9"/>
<circle cx="98" cy="18" r="11" fill="#f0c050" opacity="0.8"/>
<circle cx="85" cy="5" r="12" fill="#e05030" opacity="0.6"/>
<circle cx="158" cy="10" r="13" fill="#c050e0" opacity="0.85"/>
<circle cx="135" cy="50" r="14" fill="#502818" opacity="0.6"/>
<circle cx="150" cy="85" r="14" fill="#c04060" opacity="0.6"/>
<circle cx="115" cy="85" r="11" fill="#e06090" opacity="0.6"/>
<circle cx="70" cy="85" r="8" fill="#80a040" opacity="0.6"/>
<circle cx="95" cy="60" r="10" fill="#802030" opacity="0.5"/>
<circle cx="103.4" cy="69.0" r="2.6" fill="#ffd070" opacity="0.84"/><circle cx="128.8" cy="23.2" r="1.1" fill="#ff90d0" opacity="0.55"/><circle cx="77.9" cy="22.9" r="2.1" fill="#ff90d0" opacity="0.51"/><circle cx="36.0" cy="26.0" r="2.8" fill="#ffffff" opacity="0.56"/><circle cx="132.3" cy="12.9" r="2.2" fill="#ff90d0" opacity="0.55"/><circle cx="161.4" cy="0.5" r="2.5" fill="#ff90d0" opacity="0.85"/><circle cx="48.0" cy="89.4" r="2.1" fill="#ff90d0" opacity="0.57"/><circle cx="160.8" cy="18.3" r="2.9" fill="#ffffff" opacity="0.62"/><circle cx="60.0" cy="15.4" r="1.3" fill="#ffd070" opacity="0.63"/><circle cx="135.7" cy="54.5" r="2.2" fill="#f0b060" opacity="0.53"/><circle cx="59.0" cy="28.5" r="2.4" fill="#ff90d0" opacity="0.69"/><circle cx="117.0" cy="5.3" r="3.0" fill="#ffd070" opacity="0.88"/><circle cx="59.4" cy="37.6" r="2.1" fill="#ffffff" opacity="0.65"/><circle cx="96.0" cy="0.8" r="1.1" fill="#ff90d0" opacity="0.75"/><circle cx="158.4" cy="11.1" r="1.5" fill="#ffffff" opacity="0.64"/><circle cx="58.9" cy="48.8" r="2.6" fill="#ffd070" opacity="0.74"/><circle cx="129.6" cy="34.2" r="1.6" fill="#ffffff" opacity="0.88"/><circle cx="15.1" cy="31.7" r="2.2" fill="#ff90d0" opacity="0.64"/><circle cx="153.4" cy="50.7" r="1.6" fill="#f0b060" opacity="0.62"/><circle cx="132.6" cy="58.3" r="2.4" fill="#f0b060" opacity="0.90"/><circle cx="26.8" cy="4.5" r="3.0" fill="#ffffff" opacity="0.51"/><circle cx="122.9" cy="32.0" r="1.5" fill="#ffffff" opacity="0.56"/><circle cx="162.5" cy="59.4" r="2.6" fill="#f0b060" opacity="0.84"/><circle cx="21.7" cy="68.0" r="2.9" fill="#ffffff" opacity="0.54"/><circle cx="72.1" cy="13.9" r="2.7" fill="#f0b060" opacity="0.56"/><circle cx="153.1" cy="57.7" r="1.3" fill="#ffffff" opacity="0.88"/><circle cx="114.3" cy="29.5" r="1.5" fill="#ffffff" opacity="0.66"/><circle cx="24.3" cy="35.1" r="3.0" fill="#ff90d0" opacity="0.75"/><circle cx="82.9" cy="31.5" r="1.2" fill="#f0b060" opacity="0.71"/><circle cx="91.0" cy="46.8" r="1.1" fill="#f0b060" opacity="0.78"/><circle cx="110.2" cy="70.6" r="1.7" fill="#f0b060" opacity="0.83"/><circle cx="44.0" cy="91.2" r="2.4" fill="#f0b060" opacity="0.76"/><circle cx="96.4" cy="1.1" r="2.1" fill="#f0b060" opacity="0.63"/><circle cx="45.4" cy="26.9" r="2.0" fill="#f0b060" opacity="0.64"/><circle cx="106.9" cy="68.6" r="2.7" fill="#f0b060" opacity="0.87"/>
</g>
<text x="11.5" y="22" font-family="Liberation Sans" font-size="12.5" fill="#fff">08</text>
<rect x="156" y="84" width="6" height="5" fill="#fff"/>
</svg></div>
<div class="a dv" style="left:1325px"></div>
<div class="a clip" style="left:1342px;width:165.6px">
<svg width="166" height="93" viewBox="0 0 166 93">
<rect width="166" height="93" fill="#dfe4e3"/>
<ellipse cx="125" cy="14" rx="10" ry="12" fill="#b08060"/>
<ellipse cx="126" cy="17" rx="8" ry="10" fill="#e8c8b0"/>
<path d="M94 93L98 45L112 30L140 30L150 50L152 93Z" fill="#80888a"/>
<path d="M120 30L132 30L128 55Z" fill="#f4f4f4"/>
<rect x="72" y="79" width="46" height="14" fill="#b8c0c2"/>
<path d="M145 45L155 38L158 42L150 50Z" fill="#222"/>
<circle cx="18.5" cy="17.5" r="12.7" fill="#8e8e8e"/>
<text x="10" y="22" font-family="Liberation Sans" font-size="12.5" fill="#fff">09</text>
<path d="M9 32H48L45 41H6Z" fill="#f05a28"/>
<text x="11" y="39" font-family="Liberation Sans" font-weight="bold" font-size="5.5" textLength="32" lengthAdjust="spacingAndGlyphs" fill="#fff">Optimize Your</text>
<text x="5" y="51" font-family="Liberation Sans" font-weight="bold" font-size="8.5" textLength="70" lengthAdjust="spacingAndGlyphs" fill="#f05a28">SMALL BUSINESS</text>
<text x="5" y="61.5" font-family="Liberation Sans" font-weight="bold" font-size="8.5" textLength="57" lengthAdjust="spacingAndGlyphs" fill="#f05a28">MANAGEMENT</text>
<rect x="157" y="86" width="5" height="2" fill="#222"/>
</svg></div>
<div class="a clip" style="left:1528px;width:10px;background:#201015;border:none"><div style="width:3px;height:93px;background:#7a2a2a"></div></div>
<svg class="a" style="left:1512px;top:711px" width="22" height="35" viewBox="1512 711 22 35">
<path d="M1534 711.7H1530A16.6 16.6 0 0 0 1530 744.9H1534Z" fill="#ababab"/>
<path d="M1524 722.3L1530.7 728.8L1524 735.3" stroke="#fff" stroke-width="2.8" fill="none" stroke-linejoin="miter"/></svg>
<div class="a dv" style="left:1511px"></div>
<div class="a lb" style="left:243px">頻</div><div class="a lbr" style="left:291px">0:05</div>
<div class="a lb" style="left:412px">視頻</div><div class="a lbr" style="left:477px">0:03</div>
<div class="a lb" style="left:598px">圖片</div><div class="a lbr" style="left:663px">0:04</div>
<div class="a lb" style="left:784px">視頻</div><div class="a lbr" style="left:850px">0:27</div>
<div class="a lb" style="left:969.5px">背景</div><div class="a lbr" style="left:1036px">0:03</div>
<div class="a lb" style="left:1156px">視頻</div><div class="a lbr" style="left:1222px">0:10</div>
<div class="a lb" style="left:1342px">視頻</div><div class="a lbr" style="left:1408px">0:04</div>
<div class="a lb" style="left:1528px">視</div>
<div class="a" style="left:1590px;top:806px;width:10px;height:13px;background:#2a2624"></div><div class="a" style="left:1534px;top:649px;width:66px;height:167px;background:#eeeff3;border-bottom-right-radius:7px;box-shadow:0 1px 0 #fafafa"></div>

<svg class="a" style="left:1550px;top:722px" width="34" height="34" viewBox="0 0 34 34">
<circle cx="17" cy="16.8" r="16.3" fill="#fff"/>
<path d="M17 9.5V24M9.8 16.8H24.2" stroke="#fd8030" stroke-width="2" stroke-linecap="round"/></svg>
<div class="a" style="left:454px;top:807px;width:690px;height:8px;border-radius:4px;background:#c5c5c8"></div>
<div id="botline" class="a"></div>

<svg class="a" style="left:30px;top:15px" width="110" height="45" viewBox="30 15 110 45">
<path fill="#fb7a2c" d="M38 33.5C38 27.5 41.5 24 47.5 24L56.5 24C55.5 28 53 30.5 48.5 30.5L45 30.5C41 30.5 38.5 32 38 33.5Z"/>
<path fill="#fb7a2c" d="M38 47.5L38 40C38 35.5 41 33 45 33L52.5 33C51.5 36.5 49.5 38.5 46 38.5C43 38.5 41.5 40.5 41.5 43L41.5 45C41.5 46.5 40 47.5 38 47.5Z"/>
</svg>
<div class="a" style="left:57px;top:21.5px;font-size:26.2px;color:#fff;letter-spacing:-0.5px;line-height:32px;font-weight:normal">lexClip</div>
<div class="a" style="left:140px;top:74px;width:15px;height:66px;background:#efeff4"></div>
<div class="a" style="left:135px;top:70px;width:20px;height:14px;background:#573ebf;border-bottom-right-radius:8px"></div>
<div class="a" style="left:135px;top:130px;width:20px;height:14px;background:#553cbe;border-top-right-radius:8px"></div>
<div class="a" style="left:36px;top:84px;width:119px;height:46px;background:#efeff4;border-radius:7px 0 0 7px"></div>
<div class="a si" style="top:98px;color:#fb8a30">範本</div>
<div class="a si" style="top:164px">媒體</div>
<div class="a si" style="top:229px">文字</div>
<div class="a si" style="top:295px">視頻</div>
<div class="a si" style="top:361px">圖片</div>
<div class="a si" style="top:426px">音樂</div>
<div class="a si" style="top:492px">元素</div>
<div class="a si" style="top:557px">遮罩</div>
<div class="a si" style="top:623px">背景</div>
<div class="a si" style="top:688px">浮水印</div>
<div class="a si" style="top:754px">更多</div>
<svg class="a" style="left:40px;top:94px" width="26" height="26" viewBox="0 0 26 26" fill="none" stroke="#fb8a30" stroke-width="2" stroke-linejoin="round" stroke-linecap="round">
<path d="M13 3.5L22.5 8.5L13 13.5L3.5 8.5Z"/><path d="M3.5 13L13 18L22.5 13"/><path d="M3.5 17.5L13 22.5L22.5 17.5"/></svg>
<svg class="a" style="left:40px;top:160px" width="26" height="26" viewBox="0 0 26 26" fill="none" stroke="#cdc4ef" stroke-width="2" stroke-linejoin="round" stroke-linecap="round">
<path d="M3.5 4.5L10 4.5L12 7L22.5 7L22.5 22.5L3.5 22.5Z"/><path d="M13 11.5L13 18M9.8 14.8L16.2 14.8"/></svg>
<svg class="a" style="left:40px;top:225px" width="26" height="26" viewBox="0 0 26 26" fill="none" stroke="#cdc4ef" stroke-width="2" stroke-linecap="round">
<path d="M4.5 8L4.5 4.5L21.5 4.5L21.5 8M13 4.5L13 22.5M9 22.5L17 22.5"/></svg>
<svg class="a" style="left:40px;top:291px" width="26" height="26" viewBox="0 0 26 26" fill="none" stroke="#cdc4ef" stroke-width="2" stroke-linejoin="round">
<rect x="3.5" y="4.5" width="19" height="17" rx="1.5"/><path d="M11 10L16 13L11 16Z" fill="#cdc4ef"/></svg>
<svg class="a" style="left:40px;top:357px" width="26" height="26" viewBox="0 0 26 26" fill="none" stroke="#cdc4ef" stroke-width="2" stroke-linejoin="round">
<rect x="3.5" y="3.5" width="19" height="19" rx="1.5"/><path d="M3.5 19L10 12L15 17L18 14L22.5 18"/><circle cx="9" cy="8.5" r="1.2" fill="#cdc4ef" stroke="none"/></svg>
<svg class="a" style="left:40px;top:422px" width="26" height="26" viewBox="0 0 26 26" fill="none" stroke="#cdc4ef" stroke-width="2" stroke-linejoin="round">
<path d="M9 19.5L9 6.5L21 4.5L21 17.5M9 10L21 8"/><circle cx="6.5" cy="19.5" r="2.7"/><circle cx="18.5" cy="17.5" r="2.7"/></svg>
<svg class="a" style="left:40px;top:488px" width="26" height="26" viewBox="0 0 26 26" fill="none" stroke="#cdc4ef" stroke-width="2" stroke-linejoin="round" stroke-linecap="round">
<path d="M7.5 4L11 10.5L4 10.5Z"/><path d="M15 4.5L21.5 10.5M21.5 4.5L15 10.5"/><circle cx="7.5" cy="18" r="3.5"/><rect x="15" y="14.5" width="7" height="7"/></svg>
<svg class="a" style="left:40px;top:553px" width="26" height="26" viewBox="0 0 26 26" fill="none" stroke="#cdc4ef" stroke-width="2" stroke-linejoin="round">
<rect x="3.5" y="3.5" width="13" height="13" rx="1"/><rect x="9.5" y="9.5" width="13" height="13" rx="1"/></svg>
<svg class="a" style="left:40px;top:619px" width="26" height="26" viewBox="0 0 26 26" fill="none" stroke="#cdc4ef" stroke-width="2" stroke-linejoin="round">
<rect x="3.5" y="3.5" width="19" height="19" rx="1"/><path d="M3.5 3.5L22.5 22.5"/><g fill="#cdc4ef" stroke="none"><circle cx="7" cy="12" r="1.2"/><circle cx="7" cy="16" r="1.2"/><circle cx="7" cy="19.5" r="1.2"/><circle cx="11" cy="16" r="1.2"/><circle cx="11" cy="19.5" r="1.2"/><circle cx="15" cy="19.5" r="1.2"/></g></svg>
<svg class="a" style="left:40px;top:684px" width="26" height="26" viewBox="0 0 26 26" fill="none" stroke="#cdc4ef" stroke-width="2" stroke-linejoin="round">
<circle cx="13" cy="5.5" r="2.3"/><path d="M11 8L11 13M15 8L15 13"/><rect x="4" y="13" width="18" height="4.5" rx="1"/><path d="M4 21L22 21"/></svg>
<svg class="a" style="left:40px;top:750px" width="26" height="26" viewBox="0 0 26 26" fill="#cdc4ef">
<circle cx="6.5" cy="13" r="2"/><circle cx="13" cy="13" r="2"/><circle cx="19.5" cy="13" r="2"/></svg>

<div class="a" style="left:177px;top:15px;width:225px;height:40px;border:1px solid #e6e6ea;border-radius:5px;background:#fff"></div>
<div class="a" style="left:191px;top:25px;font-size:16px;line-height:20px;color:#666">實驗品</div>
<svg class="a" style="left:410px;top:15px" width="130" height="40" viewBox="410 15 130 40" fill="none" stroke-width="2.3" stroke-linecap="round" stroke-linejoin="round">
<path stroke="#111" d="M427.5 26.2L423 30.5L427.5 34.8M423 30.5L434.5 30.5A6.15 6.15 0 0 1 434.5 42.8L426.5 42.8"/>
<path stroke="#8d8d8d" d="M476.5 26.2L481 30.5L476.5 34.8M481 30.5L469.5 30.5A6.15 6.15 0 0 0 469.5 42.8L477.5 42.8"/>
<g stroke="#111" stroke-width="2.3" stroke-linecap="butt" stroke-linejoin="miter" fill="none">
<path d="M512.2 32.5V27.6H517.1M512.2 27.6L518 33.4"/>
<path d="M522.6 27.6H527.5V32.5M527.5 27.6L521.7 33.4"/>
<path d="M512.2 37.2V42.1H517.1M512.2 42.1L518 36.3"/>
<path d="M527.5 37.2V42.1H522.6M527.5 42.1L521.7 36.3"/>
</g></svg>
<div class="a btn" style="left:1226px;width:84px;background:#f3f4f7;color:#8a8a8e">已保存</div>
<div class="a btn" style="left:1323px;width:68px;background:#eceef2;color:#222">預覽</div>
<div class="a btn" style="left:1404px;width:94px;background:#fd8030;color:#fff;font-weight:bold;padding-right:28px;text-indent:0">輸出</div>
<svg class="a" style="left:1462px;top:27px" width="20" height="16" viewBox="0 0 20 16" fill="none" stroke="#fff" stroke-width="2.4" stroke-linecap="round" stroke-linejoin="round"><path d="M2.5 8L17 8M11 2.3L17 8L11 13.7"/></svg>
<div class="a" style="left:1511px;top:20px;width:1.5px;height:30px;background:#e3e5ea"></div>
<svg class="a" style="left:1525px;top:13px" width="41" height="41" viewBox="0 0 41 41">
<defs><clipPath id="avc"><circle cx="20.5" cy="20.5" r="20.3"/></clipPath><filter id="awr" filterUnits="userSpaceOnUse" x="880" y="260" width="520" height="170" color-interpolation-filters="sRGB">
<feComponentTransfer in="SourceAlpha" result="bin"><feFuncA type="linear" slope="2.5" intercept="-0.75"/></feComponentTransfer>
<feMorphology in="bin" operator="dilate" radius="3" result="o1"/>
<feMorphology in="bin" operator="erode" radius="3" result="i1"/>
<feComposite in="o1" in2="i1" operator="out" result="ring"/>
<feFlood flood-color="#fff"/><feComposite in2="ring" operator="in"/>
</filter>
</defs>
<g clip-path="url(#avc)">
<rect width="41" height="41" fill="#e0e0db"/><rect x="20" width="21" height="41" fill="#e6e6e1"/>
<path d="M12.5 18H30.5V26C30.5 28.5 28 30.5 25 30.5H18C15 30.5 12.5 28.5 12.5 26Z" fill="#e9c19f"/>
<path d="M11 8C15 7 22 7.5 26 9C29.5 10.5 31 14 31 18L31 21L29 21L28.5 19C24 19.5 18 19.5 14 19.5L12.5 21L12 16C12 13 11.5 10.5 11 8Z" fill="#573f33"/>
<ellipse cx="21.5" cy="26.5" rx="1.8" ry="0.9" fill="#e07a6a"/>
<path d="M11 41L11.5 33.5C12 31.5 14 30 16.5 30H26.5C29 30 30.5 31.5 31 33.5L31.5 41Z" fill="#e8694a"/>
</g></svg>
<svg class="a" style="left:1574px;top:31px" width="15" height="10" viewBox="0 0 15 10" fill="none" stroke="#777" stroke-width="1.6" stroke-linecap="round" stroke-linejoin="round"><path d="M2 2.5L7.5 8L13 2.5"/></svg>

<svg class="a" style="left:176px;top:89px" width="14" height="18" viewBox="0 0 14 18" fill="none" stroke="#555" stroke-width="1.8" stroke-linecap="round" stroke-linejoin="round"><path d="M10.5 3L4.5 9L10.5 15"/></svg>
<div class="a" style="left:197px;top:88px;font-size:15px;line-height:20px;color:#666">返回</div>
<div class="a" style="left:350px;top:84.5px;font-size:19.5px;line-height:24px;color:#1e1e1e;font-weight:normal;-webkit-text-stroke:0.95px #1e1e1e;letter-spacing:0.4px;transform:scaleX(0.83);transform-origin:0 0;white-space:nowrap">Black Friday Sale</div>
<div class="a" style="left:175px;top:126px;width:482px;height:43px;background:#fff;border-radius:5px;box-shadow:0 1px 2px rgba(0,0,0,0.04)"></div>
<div class="a" style="left:175px;top:138px;width:482px;text-align:center;font-size:16.5px;line-height:22px;color:#222">應用全部8頁模板</div>
<div class="a" style="left:676px;top:313px;width:16px;height:93px;background:#f0f0f4;border-radius:0 8px 8px 0"></div>
<svg class="a" style="left:677px;top:352px" width="14" height="16" viewBox="0 0 14 16" fill="none" stroke="#666" stroke-width="1.6" stroke-linecap="round" stroke-linejoin="round"><path d="M9.5 3L4.5 8L9.5 13"/></svg>

<svg class="a" style="left:676px;top:67px" width="924" height="46" viewBox="676 67 924 46">
<circle cx="702.7" cy="91" r="13.2" fill="#000"/>
<circle cx="739.8" cy="91" r="12.7" fill="#fff" stroke="#e4e4e4" stroke-width="1"/>
<circle cx="777" cy="91" r="13.2" fill="#00b29a"/>
<circle cx="814.2" cy="91" r="13.2" fill="#7b63e0"/>
<circle cx="851.4" cy="91" r="13.2" fill="#0096f3"/>
<circle cx="888.6" cy="91" r="13.2" fill="#fbb615"/>
<circle cx="925.8" cy="91" r="13.2" fill="#fb79a5"/>
<rect x="950" y="78.5" width="1.2" height="21" fill="#dedede"/>
<g fill="none" stroke="#111" stroke-width="2" stroke-linejoin="round" stroke-linecap="round">
<path d="M968.5 91L977 82.5L985.5 91L977 99.5Z"/><path d="M968.5 91L985.5 91"/><path d="M974 81L976 83.5"/>
</g>
<path d="M986.5 94.5C985 97 984.5 98.5 984.5 99.5A2 2 0 0 0 988.5 99.5C988.5 98.5 988 97 986.5 94.5Z" fill="#111"/>
<g fill="none" stroke="#111" stroke-width="2.2" stroke-linecap="round">
<circle cx="1570" cy="91" r="9.3"/><path d="M1568.5 85.5L1568.5 92.5L1573.5 92.5"/>
</g>
</svg>

<svg class="a" style="left:756px;top:139px" width="764" height="430" viewBox="756 139 764 430">
<defs>
<clipPath id="vclip"><rect x="756" y="139" width="764" height="430"/></clipPath>
<clipPath id="hclip"><circle cx="1425.5" cy="167.5" r="84"/></clipPath>
</defs>
<g clip-path="url(#vclip)">
<rect x="756" y="139" width="764" height="430" fill="#000"/>
<circle cx="1046" cy="123" r="66.5" fill="none" stroke="#f2e42b" stroke-width="3.5"/>
<g clip-path="url(#hclip)"><path d="M1354.5 73.5L1166.5 261.5M1368.5 73.5L1180.5 261.5M1382.5 73.5L1194.5 261.5M1396.5 73.5L1208.5 261.5M1410.5 73.5L1222.5 261.5M1424.5 73.5L1236.5 261.5M1438.5 73.5L1250.5 261.5M1452.5 73.5L1264.5 261.5M1466.5 73.5L1278.5 261.5M1480.5 73.5L1292.5 261.5M1494.5 73.5L1306.5 261.5M1508.5 73.5L1320.5 261.5M1522.5 73.5L1334.5 261.5M1536.5 73.5L1348.5 261.5M1550.5 73.5L1362.5 261.5M1564.5 73.5L1376.5 261.5M1578.5 73.5L1390.5 261.5M1592.5 73.5L1404.5 261.5M1606.5 73.5L1418.5 261.5M1620.5 73.5L1432.5 261.5M1634.5 73.5L1446.5 261.5M1648.5 73.5L1460.5 261.5M1662.5 73.5L1474.5 261.5M1676.5 73.5L1488.5 261.5M1690.5 73.5L1502.5 261.5" stroke="#f43a7a" stroke-width="4.2" fill="none"/></g>
<circle cx="1425.5" cy="167.5" r="84" fill="none" stroke="#f43a7a" stroke-width="4.5"/>
<rect x="756" y="252" width="168" height="74" fill="#f8397a"/>
<g fill="#b3f5f9" color="#b3f5f9" transform="translate(9,9)"><path fill-rule="evenodd" d="M915 399L932 292L963 292L972 399L955 399L952 377L938 377L935 399ZM939 361L951 361L947 316L943 316Z"/><path d="M971.5 292L989 292L996 350L1008 292L1028 292L1040 350L1047 292L1064 292L1052 399L1032 399L1018 337L1004 399L984 399Z"/><path d="M1063 292L1116.5 292L1116.5 309L1080 309L1080 337L1112 337L1112 354L1080 354L1080 382L1116.5 382L1116.5 399L1063 399Z"/><path fill="none" stroke="currentColor" stroke-width="17" d="M1165.5 324C1165.5 307 1157 300.5 1145 300.5C1133 300.5 1124.5 307 1124.5 322C1124.5 341 1165.5 349 1165.5 371C1165.5 384 1157 390.5 1145 390.5C1133 390.5 1124.5 384 1124.5 366"/><path fill="none" stroke="currentColor" stroke-width="17" d="M1182 322A22 22 0 0 1 1226 322L1226 368A22 22 0 0 1 1182 368Z"/><path d="M1231 399L1231 292L1254 292L1269.5 348L1285 292L1308 292L1308 399L1292 399L1292 333L1277 399L1262 399L1247 333L1247 399Z"/><path d="M1314 292L1363.6 292L1363.6 309L1331 309L1331 337L1360 337L1360 354L1331 354L1331 382L1363.6 382L1363.6 399L1314 399Z"/></g><g filter="url(#awr)" fill="#fff" color="#fff"><path fill-rule="evenodd" d="M915 399L932 292L963 292L972 399L955 399L952 377L938 377L935 399ZM939 361L951 361L947 316L943 316Z"/></g><g filter="url(#awr)" fill="#fff" color="#fff"><path d="M971.5 292L989 292L996 350L1008 292L1028 292L1040 350L1047 292L1064 292L1052 399L1032 399L1018 337L1004 399L984 399Z"/></g><g filter="url(#awr)" fill="#fff" color="#fff"><path d="M1063 292L1116.5 292L1116.5 309L1080 309L1080 337L1112 337L1112 354L1080 354L1080 382L1116.5 382L1116.5 399L1063 399Z"/></g><g filter="url(#awr)" fill="#fff" color="#fff"><path fill="none" stroke="currentColor" stroke-width="17" d="M1165.5 324C1165.5 307 1157 300.5 1145 300.5C1133 300.5 1124.5 307 1124.5 322C1124.5 341 1165.5 349 1165.5 371C1165.5 384 1157 390.5 1145 390.5C1133 390.5 1124.5 384 1124.5 366"/></g><g filter="url(#awr)" fill="#fff" color="#fff"><path fill="none" stroke="currentColor" stroke-width="17" d="M1182 322A22 22 0 0 1 1226 322L1226 368A22 22 0 0 1 1182 368Z"/></g><g filter="url(#awr)" fill="#fff" color="#fff"><path d="M1231 399L1231 292L1254 292L1269.5 348L1285 292L1308 292L1308 399L1292 399L1292 333L1277 399L1262 399L1247 333L1247 399Z"/></g><g filter="url(#awr)" fill="#fff" color="#fff"><path d="M1314 292L1363.6 292L1363.6 309L1331 309L1331 337L1360 337L1360 354L1331 354L1331 382L1363.6 382L1363.6 399L1314 399Z"/></g>
<text x="1024" y="432" font-family="Liberation Sans" font-weight="bold" font-size="14" letter-spacing="2.6" fill="#d5f3f6">UNIVERSAL EXPRESSION</text>
<path d="M830.0 455.5H842.0M836.0 449.5V461.5M830.0 486.0H842.0M836.0 480.0V492.0M830.0 516.5H842.0M836.0 510.5V522.5M830.0 547.0H842.0M836.0 541.0V553.0M862.6 455.5H874.6M868.6 449.5V461.5M862.6 486.0H874.6M868.6 480.0V492.0M862.6 516.5H874.6M868.6 510.5V522.5M862.6 547.0H874.6M868.6 541.0V553.0M895.2 455.5H907.2M901.2 449.5V461.5M895.2 486.0H907.2M901.2 480.0V492.0M895.2 516.5H907.2M901.2 510.5V522.5M895.2 547.0H907.2M901.2 541.0V553.0M927.8 455.5H939.8M933.8 449.5V461.5M927.8 486.0H939.8M933.8 480.0V492.0M927.8 516.5H939.8M933.8 510.5V522.5M927.8 547.0H939.8M933.8 541.0V553.0M960.4 455.5H972.4M966.4 449.5V461.5M960.4 486.0H972.4M966.4 480.0V492.0M960.4 516.5H972.4M966.4 510.5V522.5M960.4 547.0H972.4M966.4 541.0V553.0M993.0 455.5H1005.0M999.0 449.5V461.5M993.0 486.0H1005.0M999.0 480.0V492.0M993.0 516.5H1005.0M999.0 510.5V522.5M993.0 547.0H1005.0M999.0 541.0V553.0" stroke="#f6e82a" stroke-width="3.2" fill="none"/>
<circle cx="1236" cy="543" r="66.5" fill="none" stroke="#f63c7c" stroke-width="6"/>
<circle cx="1535" cy="485" r="49" fill="#efe52e"/>
<rect x="1478" y="528" width="27" height="26" fill="#fff"/>
<g fill="#000"><path d="M1482 541L1486 537.5L1486 544.5Z"/><path d="M1501 541L1497 537.5L1497 544.5Z"/><path d="M1489 545L1492 536.5L1494.5 537.5L1491.5 546Z"/></g>
</g>
</svg>
<div class="a" style="left:756px;top:583.5px;width:764px;height:2px;background:#bdbdc7"></div>
<div class="a" style="left:756px;top:603px;font-size:14.5px;line-height:20px;color:#333;letter-spacing:-0.15px">0:00 / 0:03</div>
<svg class="a" style="left:1128px;top:600px" width="26" height="28" viewBox="0 0 26 28"><path d="M3.5 4L21 14L3.5 24Z" fill="#2e2e2e"/></svg>
<svg class="a" style="left:1400px;top:600px" width="24" height="28" viewBox="0 0 24 28" fill="none" stroke="#333" stroke-width="2" stroke-linecap="round">
<rect x="8.5" y="3.5" width="7" height="13" rx="3.5"/><path d="M4.5 12.5C4.5 17.5 7.5 20.5 12 20.5C16.5 20.5 19.5 17.5 19.5 12.5M12 20.5L12 24"/></svg>
<div class="a" style="left:1454px;top:603px;font-size:16px;line-height:20px;color:#2a2a2a">0:03.00</div>
<div id="obox" class="a"></div>
</body>
</html>
